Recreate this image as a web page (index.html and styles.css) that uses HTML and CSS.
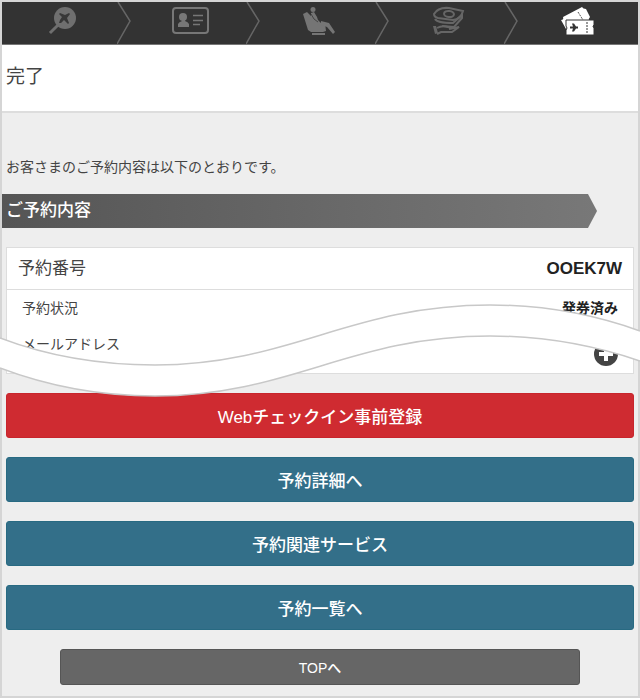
FILE: index.html
```html
<!DOCTYPE html>
<html lang="ja">
<head>
<meta charset="UTF-8">
<meta name="viewport" content="width=device-width, initial-scale=1">
<title>完了</title>
<link rel="stylesheet" href="styles.css">
</head>
<body>
<div class="page">

<ol class="steps">
    <li>
        <svg class="icon" viewBox="0 0 40 32" aria-label="検索">
            <circle cx="23" cy="12" r="11" fill="#6f6f6f"/>
            <path d="M15 20l-6 6" stroke="#6f6f6f" stroke-width="3" stroke-linecap="square"/>
            <path d="M18 7l5 2 4-2 1 1-3 4 2 5-1 1-4-4-3 3h-2l1-3 2-3-3-3z" fill="#383838"/>
        </svg>
        <svg class="arrow" viewBox="0 0 14 42"><path d="M1 0l12 19L0 42"/></svg>
    </li>
    <li>
        <svg class="icon" viewBox="0 0 40 32" aria-label="お客さま情報">
            <rect x="2" y="2" width="35" height="25" rx="3" fill="none" stroke="#777" stroke-width="2"/>
            <circle cx="12" cy="11" r="4" fill="#777"/>
            <path d="M7 21v-3q1-2 4-3v-3h3v3q3 1 4 3v3z" fill="#777"/>
            <path d="M22 9.500h10M22 14.500h10M22 18.500h7" stroke="#777" stroke-width="1.500"/>
        </svg>
        <svg class="arrow" viewBox="0 0 14 42"><path d="M1 0l12 19L0 42"/></svg>
    </li>
    <li>
        <svg class="icon" viewBox="0 0 40 32" aria-label="座席">
            <circle cx="13" cy="3.500" r="2.500" fill="#757575"/>
            <path d="M3 8l4-2 4 4v-3l3-1 3 5 1 3 3 3 4 0 1 8-3 1H11l-3-2z" fill="#757575"/>
            <path d="M11 8l3 5 4 3" fill="none" stroke="#444" stroke-width="1"/>
            <path d="M21 15l8 2 6 9-2 2-6-7-6-2z" fill="#757575"/>
            <path d="M12 28h13" stroke="#757575" stroke-width="2"/>
        </svg>
        <svg class="arrow" viewBox="0 0 14 42"><path d="M1 0l12 19L0 42"/></svg>
    </li>
    <li>
        <svg class="icon" viewBox="0 0 40 32" aria-label="お支払い">
            <g fill="none" stroke="#666" stroke-width="2">
                <path d="M5 8q4-7 15-6l14 3q-2 8-10 9l-15-2q-4-1-4-4z"/>
                <path d="M6 13q2 4 18 4l9-8v3l-8 9-12-1"/>
                <ellipse cx="20" cy="8" rx="5" ry="3" transform="rotate(8 20 8)"/>
                <path d="M8 22q5-3 11-1h6l-5 2 10-2-7 5H12l-4 2"/>
            </g>
            <path d="M4 20h3l2 7-3 1z" fill="#666"/>
        </svg>
        <svg class="arrow" viewBox="0 0 14 42"><path d="M1 0l12 19L0 42"/></svg>
    </li>
    <li aria-current="step">
        <svg class="icon" viewBox="0 0 40 32" aria-label="完了">
            <path d="M3 14q3 0 2-3L24 1q1 2 4 2l4 8q-2 2-1 4L8 23z" fill="#fff"/>
            <path d="M20 6l5 8" stroke="#555" stroke-width="1" stroke-dasharray="2 1"/>
            <path d="M8 14h28v5q-2 1 0 3v7H8v-5q2-2 0-4z" fill="#fff" stroke="#333" stroke-width="1"/>
            <path d="M29 16v12" stroke="#333" stroke-width="1" stroke-dasharray="2 1"/>
            <path d="M12 20.500h3l-1-3h2l2 3h2v2h-2l-2 3h-2l1-3h-3z" fill="#333"/>
        </svg>
    </li>
</ol>

<h1>完了</h1>

<p class="lead">お客さまのご予約内容は以下のとおりです。</p>
<h2>ご予約内容</h2>

<div class="details">
    <table>
        <tr class="number">
            <th scope="row">予約番号</th>
            <td>OOEK7W</td>
        </tr>
        <tr>
            <th scope="row">予約状況</th>
            <td>発券済み</td>
        </tr>
        <tr class="mail">
            <th scope="row">メールアドレス</th>
            <td>
                <button type="button" class="open" aria-label="メールアドレスを表示">
                    <svg viewBox="0 0 24 24"><path d="M12 5v14M5 12h14" stroke="#fff" stroke-width="4"/></svg>
                </button>
            </td>
        </tr>
    </table>
    <!-- omitted part of the list -->
    <svg class="wave" viewBox="0 0 640 100" preserveAspectRatio="none" aria-hidden="true">
        <path class="fill" d="M0 38C50 57 100 65 155 65C290 65 350 5 490 5C540 5 590 13 640 31V61C590 44 540 36 490 36C350 36 290 96 155 96C100 96 50 87 0 68Z"/>
        <path class="line" d="M0 38C50 57 100 65 155 65C290 65 350 5 490 5C540 5 590 13 640 31"/>
        <path class="line" d="M0 68C50 87 100 96 155 96C290 96 350 36 490 36C540 36 590 44 640 61"/>
    </svg>
</div>

<div class="buttons">
    <button type="button" class="checkin">Webチェックイン事前登録</button>
    <button type="button">予約詳細へ</button>
    <button type="button">予約関連サービス</button>
    <button type="button">予約一覧へ</button>
    <button type="button" class="top">TOPへ</button>
</div>

</div>
</body>
</html>
```

FILE: styles.css
```css
* {
    box-sizing: border-box;
}
body {
    margin: 0;
    background: #fff;
    color: #444;
    font-family: "Liberation Sans", "Noto Sans CJK JP", sans-serif;
    font-size: 14px;
    line-height: 20px;
}
.page {
    background: #eee;
    border: 2px solid #d5d5d5;
}

/* step bar */
.steps {
    display: grid;
    grid-template-columns: 129fr 129fr 129fr 129fr 120fr;
    height: 43px;
    margin: 0;
    padding: 0;
    list-style: none;
    background: #333;
    border-bottom: 1px solid #777;
}
.steps li {
    position: relative;
    display: flex;
    justify-content: center;
    padding: 4px 9px 0 0;
}
.steps li:last-child {
    padding-right: 0;
}
.icon {
    width: 40px;
    height: 32px;
}
.arrow {
    position: absolute;
    top: 0;
    right: 0;
    width: 14px;
    height: 42px;
    fill: none;
    stroke: #666;
    stroke-width: 1.5;
}

h1 {
    margin: 0;
    padding: 18px 4px 20px;
    background: #fff;
    border-bottom: 2px solid #ddd;
    font-size: 19px;
    line-height: 28px;
    font-weight: normal;
}
.lead {
    margin: 44px 4px 17px;
}
h2 {
    margin: 0 41px 19px 0;
    padding: 0 4px;
    background: linear-gradient(to right, #555, #787878);
    clip-path: polygon(0 0, calc(100% - 9px) 0, 100% 50%, calc(100% - 9px) 100%, 0 100%);
    color: #fff;
    font-size: 17px;
    line-height: 34px;
    font-weight: 500;
}

/* reservation */
.details {
    position: relative;
    padding: 0 4px;
}
table {
    width: 100%;
    background: #fff;
    border: 1px solid #ddd;
    border-spacing: 0;
}
th {
    padding: 8px 15px;
    font-weight: normal;
    text-align: left;
    vertical-align: top;
}
td {
    padding: 8px 15px;
    color: #222;
    font-weight: bold;
    text-align: right;
}
.number th,
.number td {
    padding: 11px 11px 10px;
    border-bottom: 1px solid #ddd;
    font-size: 17px;
}
.mail td {
    padding: 16px 15px 7px;
}
.open {
    width: 24px;
    height: 24px;
    padding: 0;
    border: 0;
    border-radius: 50%;
    background: #444;
    vertical-align: top;
}
.open svg {
    display: block;
}
.wave {
    position: absolute;
    top: 53px;
    left: -2px;
    width: calc(100% + 4px);
    height: 100px;
}
.wave .fill {
    fill: #fff;
}
.wave .line {
    fill: none;
    stroke: #c8c8c8;
    stroke-width: 1.5;
}

/* buttons */
.buttons {
    display: flex;
    flex-direction: column;
    gap: 19px;
    padding: 19px 4px 11px;
}
.buttons button {
    height: 45px;
    padding: 0;
    border: 1px solid #286a82;
    border-radius: 3px;
    background: #336f89;
    color: #fff;
    font-family: inherit;
    font-size: 17px;
    font-weight: 500;
}
.buttons .checkin {
    border-color: #c8252c;
    background: #cf2b31;
}
.buttons .top {
    height: 36px;
    margin: 0 54px;
    border-color: #555;
    background: #666;
    font-size: 14px;
}
```
